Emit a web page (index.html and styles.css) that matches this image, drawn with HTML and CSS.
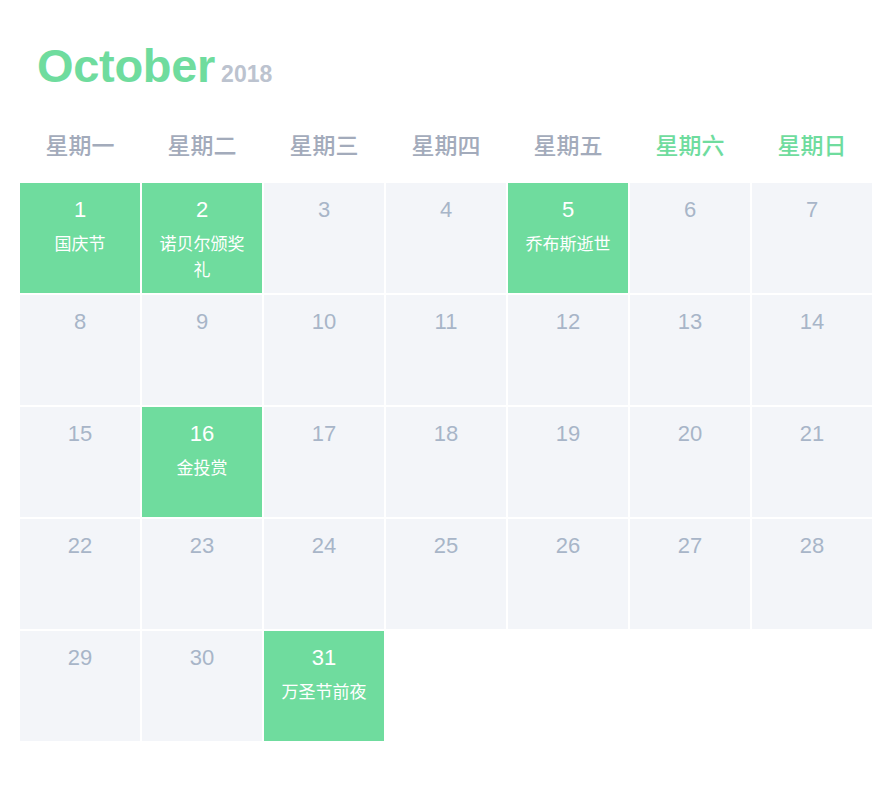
FILE: index.html
```html
<!DOCTYPE html>
<html lang="zh">
<head>
<meta charset="utf-8">
<link rel="stylesheet" href="styles.css">
</head>
<body>
<div class="cal">
  <h1 class="title"><span class="month">October</span><span class="year">2018</span></h1>
  <div class="weekdays">
    <div>星期一</div><div>星期二</div><div>星期三</div><div>星期四</div><div>星期五</div><div class="we">星期六</div><div class="we">星期日</div>
  </div>
  <div class="grid">
    <div class="cell ev"><div class="n">1</div><div class="l">国庆节</div></div>
    <div class="cell ev"><div class="n">2</div><div class="l">诺贝尔颁奖礼</div></div>
    <div class="cell"><div class="n">3</div></div>
    <div class="cell"><div class="n">4</div></div>
    <div class="cell ev"><div class="n">5</div><div class="l">乔布斯逝世</div></div>
    <div class="cell"><div class="n">6</div></div>
    <div class="cell"><div class="n">7</div></div>
    <div class="cell"><div class="n">8</div></div>
    <div class="cell"><div class="n">9</div></div>
    <div class="cell"><div class="n">10</div></div>
    <div class="cell"><div class="n">11</div></div>
    <div class="cell"><div class="n">12</div></div>
    <div class="cell"><div class="n">13</div></div>
    <div class="cell"><div class="n">14</div></div>
    <div class="cell"><div class="n">15</div></div>
    <div class="cell ev"><div class="n">16</div><div class="l">金投赏</div></div>
    <div class="cell"><div class="n">17</div></div>
    <div class="cell"><div class="n">18</div></div>
    <div class="cell"><div class="n">19</div></div>
    <div class="cell"><div class="n">20</div></div>
    <div class="cell"><div class="n">21</div></div>
    <div class="cell"><div class="n">22</div></div>
    <div class="cell"><div class="n">23</div></div>
    <div class="cell"><div class="n">24</div></div>
    <div class="cell"><div class="n">25</div></div>
    <div class="cell"><div class="n">26</div></div>
    <div class="cell"><div class="n">27</div></div>
    <div class="cell"><div class="n">28</div></div>
    <div class="cell"><div class="n">29</div></div>
    <div class="cell"><div class="n">30</div></div>
    <div class="cell ev"><div class="n">31</div><div class="l">万圣节前夜</div></div>
  </div>
</div>
</body>
</html>
```
FILE: styles.css
```css
* { box-sizing: border-box; }
html, body { margin: 0; padding: 0; background: #fff; }
body { font-family: "Liberation Sans", "Noto Sans CJK SC", sans-serif; }
.cal { padding: 0 20px; width: 892px; }
.title { margin: 0; padding: 40px 0 0 17px; height: 101px; line-height: 52px; font-weight: bold; }
.month { font-size: 47px; color: #6fdc9e; letter-spacing: -0.3px; }
.year { font-size: 23px; color: #bcc3cf; margin-left: 6px; }
.weekdays { display: grid; grid-template-columns: repeat(7, 120px); column-gap: 2px; height: 82px; align-items: center; padding-top: 4px; }
.weekdays div { text-align: center; font-size: 23px; font-weight: 500; color: #a3abbb; font-family: "Noto Sans CJK SC", sans-serif; }
.weekdays .we { color: #6fdc9e; }
.grid { display: grid; grid-template-columns: repeat(7, 120px); grid-auto-rows: 110px; gap: 2px; }
.cell { background: #f3f5f9; text-align: center; padding: 14px 10px 0; }
.cell .n { font-size: 22px; line-height: 26px; color: #a8b5c8; }
.cell .l { font-size: 17px; line-height: 26px; color: #fff; margin-top: 7px; font-family: "Noto Sans CJK SC", sans-serif; }
.cell.ev { background: #6fdc9e; }
.cell.ev .n { color: #fff; }
```
